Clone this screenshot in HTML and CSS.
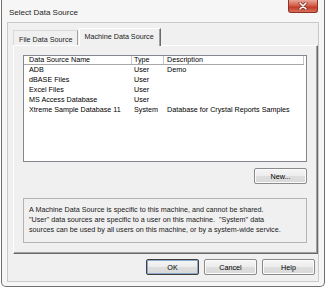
FILE: index.html
```html
<!DOCTYPE html>
<html lang="en">
<head>
  <meta charset="UTF-8">
  <title>Select Data Source</title>
  <link rel="stylesheet" href="styles.css">
</head>
<body>
  <div class="window">
    <div class="titlebar">
      <span class="title">Select Data Source</span>
      <button class="close-btn" aria-label="Close">
        <svg width="10" height="8" viewBox="0 0 10 8">
          <path d="M2 1 L8 7 M8 1 L2 7" stroke="#7a2a20" stroke-width="3" stroke-linecap="round"/>
          <path d="M2 1 L8 7 M8 1 L2 7" stroke="#fff" stroke-width="1.6" stroke-linecap="round"/>
        </svg>
      </button>
    </div>

    <div class="client">
      <div class="tabs">
        <div class="tab">File Data Source</div>
        <div class="tab active">Machine Data Source</div>
      </div>

      <div class="panel">
        <div class="listview">
          <div class="lv-row lv-header">
            <span class="col-name">Data Source Name</span>
            <span class="col-type">Type</span>
            <span class="col-desc">Description</span>
          </div>
          <div class="lv-row">
            <span class="col-name">ADB</span>
            <span class="col-type">User</span>
            <span class="col-desc">Demo</span>
          </div>
          <div class="lv-row">
            <span class="col-name">dBASE Files</span>
            <span class="col-type">User</span>
            <span class="col-desc"></span>
          </div>
          <div class="lv-row">
            <span class="col-name">Excel Files</span>
            <span class="col-type">User</span>
            <span class="col-desc"></span>
          </div>
          <div class="lv-row">
            <span class="col-name">MS Access Database</span>
            <span class="col-type">User</span>
            <span class="col-desc"></span>
          </div>
          <div class="lv-row">
            <span class="col-name">Xtreme Sample Database 11</span>
            <span class="col-type">System</span>
            <span class="col-desc">Database for Crystal Reports Samples</span>
          </div>
        </div>

        <div class="new-row">
          <button class="btn">New...</button>
        </div>

        <div class="info">
          A Machine Data Source is specific to this machine, and cannot be shared.<br>
          "User" data sources are specific to a user on this machine. &nbsp;"System" data<br>
          sources can be used by all users on this machine, or by a system-wide service.
        </div>
      </div>

      <div class="dialog-buttons">
        <button class="btn btn-default">OK</button>
        <button class="btn">Cancel</button>
        <button class="btn">Help</button>
      </div>
    </div>
  </div>
</body>
</html>
```

FILE: styles.css
```css
/* Base */
* {
  box-sizing: border-box;
}

body {
  margin: 0;
  background: #ffffff;
  font-family: 'Liberation Sans', Arial, sans-serif;
  font-size: 7.2px;
  color: #000;
}

/* Window frame */
.window {
  width: 324px;
  height: 287px;
  margin-left: 1px;
  border: 1px solid #6f6f6f;
  border-top: none;
  border-radius: 0 0 5px 5px;
  background: #f6f6f6;
  padding: 0 5px 4px 5px;
  display: flex;
  flex-direction: column;
}

.titlebar {
  height: 22px;
  display: flex;
  align-items: flex-start;
  justify-content: space-between;
}

.title {
  font-size: 8px;
  margin: 8px 0 0 2px;
  color: #1e1e1e;
}

.close-btn {
  width: 30px;
  height: 13px;
  margin: 0 1px 0 0;
  padding: 0;
  border: 1px solid #8c3226;
  border-top: none;
  border-radius: 0 0 3px 3px;
  background: linear-gradient(#e9a696, #d4604c 45%, #c33d28 60%, #d9705c);
  display: flex;
  align-items: center;
  justify-content: center;
}

.client {
  flex: 1;
  border: 1px solid #c9c9c9;
  background: #f0f0f0;
  padding: 5px 2px 0 5px;
  display: flex;
  flex-direction: column;
}

/* Tabs */
.tabs {
  display: flex;
  align-items: flex-end;
  height: 17px;
  padding-left: 0;
  position: relative;
  z-index: 1;
}

.tab {
  height: 15px;
  padding: 4px 4px 0 5px;
  border: 1px solid #d8d8d8;
  border-bottom: none;
  border-right-color: #a0a0a0;
  background: #f0f0f0;
  color: #1a1a1a;
}

.tab.active {
  height: 18px;
  padding: 3px 6px 0 5px;
  margin-left: 1px;
  border-left-color: #ffffff;
  border-top-color: #ffffff;
  border-right: 1px solid #6a6a6a;
  box-shadow: inset -1px 0 0 #a0a0a0;
  margin-bottom: -1px;
}

.panel {
  width: 305px;
  height: 209px;
  border: 1px solid #ffffff;
  border-right-color: #6a6a6a;
  border-bottom-color: #6a6a6a;
  box-shadow: inset -1px -1px 0 #a0a0a0;
  padding: 9px 9px 0 9px;
}

/* List view */
.listview {
  width: 284px;
  height: 107px;
  border: 1px solid #828790;
  background: #ffffff;
}

.lv-row {
  display: flex;
  height: 10px;
  line-height: 10px;
  white-space: nowrap;
}

.lv-header {
  height: 9px;
  line-height: 8px;
  border-bottom: 1px solid #a8a8a8;
  margin-right: 2px;
}

.lv-header span {
  border-right: 1px solid #c8c8c8;
}

.col-name {
  width: 108px;
  padding-left: 5px;
}

.col-type {
  width: 32px;
  padding-left: 2px;
}

.col-desc {
  width: 140px;
  padding-left: 3px;
}

/* Buttons */
.btn {
  width: 53px;
  height: 16px;
  padding: 0;
  font-family: inherit;
  font-size: 7.2px;
  color: #000;
  border: 1px solid #8a8a8a;
  border-radius: 2px;
  background: linear-gradient(#f6f6f6, #ececec 50%, #dedede 51%, #d9d9d9);
  box-shadow: inset 0 0 0 1px #fbfbfb;
}

.btn-default {
  border-color: #3f3f3f;
  box-shadow: inset 0 0 0 1px #8aa8c8;
}

.new-row {
  display: flex;
  justify-content: flex-end;
  width: 284px;
  margin-top: 6px;
}

.info {
  width: 284px;
  height: 45px;
  margin-top: 14px;
  border: 1px solid #b4b4b4;
  padding: 6px 5px;
  line-height: 10px;
  color: #1a1a1a;
}

.dialog-buttons {
  display: flex;
  justify-content: flex-end;
  gap: 5px;
  margin-top: 5px;
  padding-right: 1px;
}
```
